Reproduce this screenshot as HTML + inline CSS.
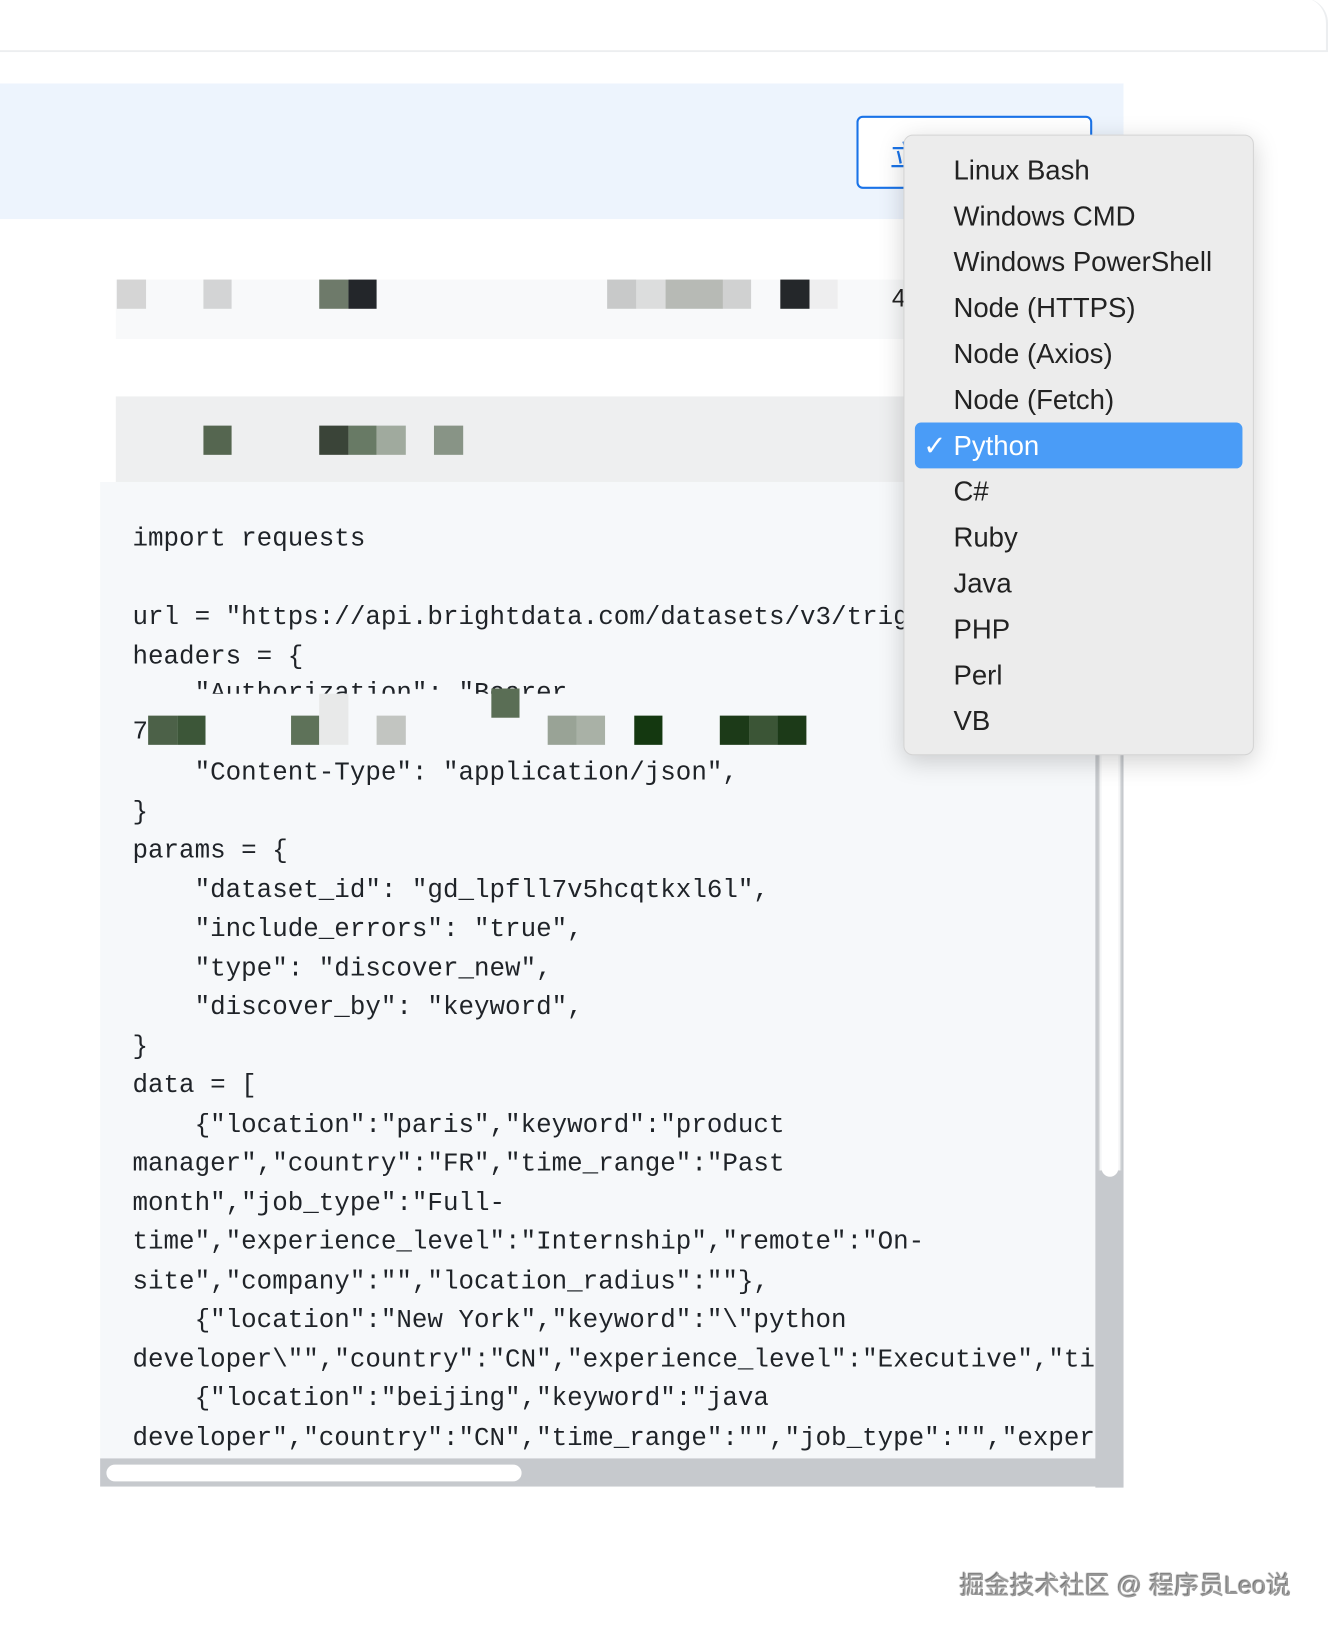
<!DOCTYPE html>
<html><head><meta charset="utf-8"><style>
html,body{margin:0;padding:0;width:1328px;height:1636px;overflow:hidden;background:#fff}
#w{position:absolute;left:0;top:0;width:1273px;height:1568px;transform:scale(1.0432);transform-origin:0 0;font-family:"Liberation Sans",sans-serif}
.a{position:absolute}
.code{position:absolute;left:127px;font-family:"Liberation Mono",monospace;font-size:24.8px;color:#1f2328;white-space:pre;line-height:37.5px}
.b{position:absolute;height:28px}
.dd{position:absolute;left:866px;top:129px;width:334px;height:593px;background:#ececec;border:1px solid #d4d4d4;border-radius:9px;box-shadow:0 6px 24px rgba(0,0,0,.18)}
.it{position:absolute;left:47px;font-size:26.4px;color:#222;line-height:30px}
</style></head><body><div id="w">
<div class="a" style="left:-2px;top:-2px;width:1273px;height:50px;background:#fff;border-bottom:2px solid #eceef0;border-right:2px solid #eceef0;border-top-right-radius:24px;border-bottom-right-radius:0"></div>
<div class="a" style="left:0;top:80px;width:1077px;height:130px;background:#edf4fd"></div>
<div class="a" style="left:821px;top:111px;width:222px;height:66px;border:2px solid #1a73e8;border-radius:6px;background:#fff"></div>
<div class="a" style="left:853px;top:128px;font-size:28px;color:#1a73e8;font-family:'Liberation Sans','Noto Sans CJK SC',sans-serif">立</div>
<div class="a" style="left:111px;top:268px;width:760px;height:57px;background:#f8f9fa"></div>
<div class="b" style="left:112px;top:268px;width:28px;background:#d5d5d5"></div>
<div class="b" style="left:195px;top:268px;width:27px;background:#d3d4d5"></div>
<div class="b" style="left:306px;top:268px;width:28px;background:#6e7a6a"></div>
<div class="b" style="left:334px;top:268px;width:27px;background:#23262a"></div>
<div class="b" style="left:582px;top:268px;width:28px;background:#c8c9c9"></div>
<div class="b" style="left:610px;top:268px;width:28px;background:#dcdddd"></div>
<div class="b" style="left:638px;top:268px;width:55px;background:#b7bab5"></div>
<div class="b" style="left:693px;top:268px;width:27px;background:#d0d1d1"></div>
<div class="b" style="left:748px;top:268px;width:28px;background:#24272a"></div>
<div class="b" style="left:776px;top:268px;width:27px;background:#eeeeef"></div>
<div class="a" style="left:855px;top:273px;font-size:24px;color:#222">4</div>
<div class="a" style="left:111px;top:380px;width:760px;height:87px;background:#eeeff0"></div>
<div class="b" style="left:195px;top:408px;width:27px;background:#556650"></div>
<div class="b" style="left:306px;top:408px;width:28px;background:#3a4438"></div>
<div class="b" style="left:334px;top:408px;width:27px;background:#687a65"></div>
<div class="b" style="left:361px;top:408px;width:28px;background:#a0aa9e"></div>
<div class="b" style="left:416px;top:408px;width:28px;background:#889486"></div>
<div class="a" style="left:96px;top:462px;width:954px;height:936px;background:#f6f8fa;overflow:hidden">
<div class="a" style="left:0;top:0;width:954px;height:936px">
<div class="code" style="left:31px;top:37px">import requests

url = "https://api.brightdata.com/datasets/v3/trigger"
headers = {</div>
<div class="a" style="left:0;top:187px;width:954px;height:16px;overflow:hidden"><div class="code" style="left:31px;top:-2px">    "Authorization": "Bearer</div></div>
<div class="code" style="left:31px;top:222px">7                                                     ff</div>
<div class="code" style="left:31px;top:261px">    "Content-Type": "application/json",
}
params = {
    "dataset_id": "gd_lpfll7v5hcqtkxl6l",
    "include_errors": "true",
    "type": "discover_new",
    "discover_by": "keyword",
}
data = [
    {"location":"paris","keyword":"product
manager","country":"FR","time_range":"Past
month","job_type":"Full-
time","experience_level":"Internship","remote":"On-
site","company":"","location_radius":""},
    {"location":"New York","keyword":"\"python
developer\"","country":"CN","experience_level":"Executive","time_range":""},
    {"location":"beijing","keyword":"java
developer","country":"CN","time_range":"","job_type":"","experience_level":""}</div>
<div class="b" style="left:46px;top:224px;width:28px;background:#4c6148"></div>
<div class="b" style="left:74px;top:224px;width:27px;background:#3c5638"></div>
<div class="b" style="left:183px;top:224px;width:27px;background:#5e7259"></div>
<div class="b" style="left:210px;top:203px;width:28px;height:49px;background:#e8e9e9"></div>
<div class="b" style="left:265px;top:224px;width:28px;background:#c2c5c1"></div>
<div class="b" style="left:375px;top:198px;width:27px;background:#5a6e55"></div>
<div class="b" style="left:429px;top:224px;width:28px;background:#99a396"></div>
<div class="b" style="left:457px;top:224px;width:27px;background:#a9b1a6"></div>
<div class="b" style="left:512px;top:224px;width:27px;background:#143810"></div>
<div class="b" style="left:594px;top:224px;width:28px;background:#1c3a18"></div>
<div class="b" style="left:622px;top:224px;width:27px;background:#3b5536"></div>
<div class="b" style="left:649px;top:224px;width:28px;background:#1c3a18"></div>
</div></div>
<div class="a" style="left:1050px;top:462px;width:27px;height:964px;background:#c6c9cd"></div>
<div class="a" style="left:1053px;top:462px;width:20px;height:660px;background:#f4f5f6;border-left:1px solid #d0d2d5;border-right:1px solid #d0d2d5"></div>
<div class="a" style="left:1056px;top:700px;width:16px;height:428px;background:#fff;border-radius:8px"></div>
<div class="a" style="left:96px;top:1398px;width:981px;height:27px;background:#c6c9cd"></div>
<div class="a" style="left:102px;top:1404px;width:398px;height:16px;background:#fff;border-radius:8px"></div>
<div class="dd">
<div class="a" style="left:10px;top:275px;width:314px;height:44px;background:#4a9cf7;border-radius:6px"></div>
<div class="it" style="top:18px">Linux Bash</div>
<div class="it" style="top:62px">Windows CMD</div>
<div class="it" style="top:106px">Windows PowerShell</div>
<div class="it" style="top:150px">Node (HTTPS)</div>
<div class="it" style="top:194px">Node (Axios)</div>
<div class="it" style="top:238px">Node (Fetch)</div>
<div class="it" style="top:282px;color:#fff"><span style="position:absolute;left:-29px">✓</span>Python</div>
<div class="it" style="top:326px">C#</div>
<div class="it" style="top:370px">Ruby</div>
<div class="it" style="top:414px">Java</div>
<div class="it" style="top:458px">PHP</div>
<div class="it" style="top:502px">Perl</div>
<div class="it" style="top:546px">VB</div>
</div>
<div class="a" style="left:920px;top:1500px;font-size:24px;color:#9a9a9a;font-family:'Liberation Sans','Noto Sans CJK SC',sans-serif;text-shadow:1px 1px 1px #fff,-1px -1px 1px #666">掘金技术社区 @ 程序员Leo说</div>
</div></body></html>
